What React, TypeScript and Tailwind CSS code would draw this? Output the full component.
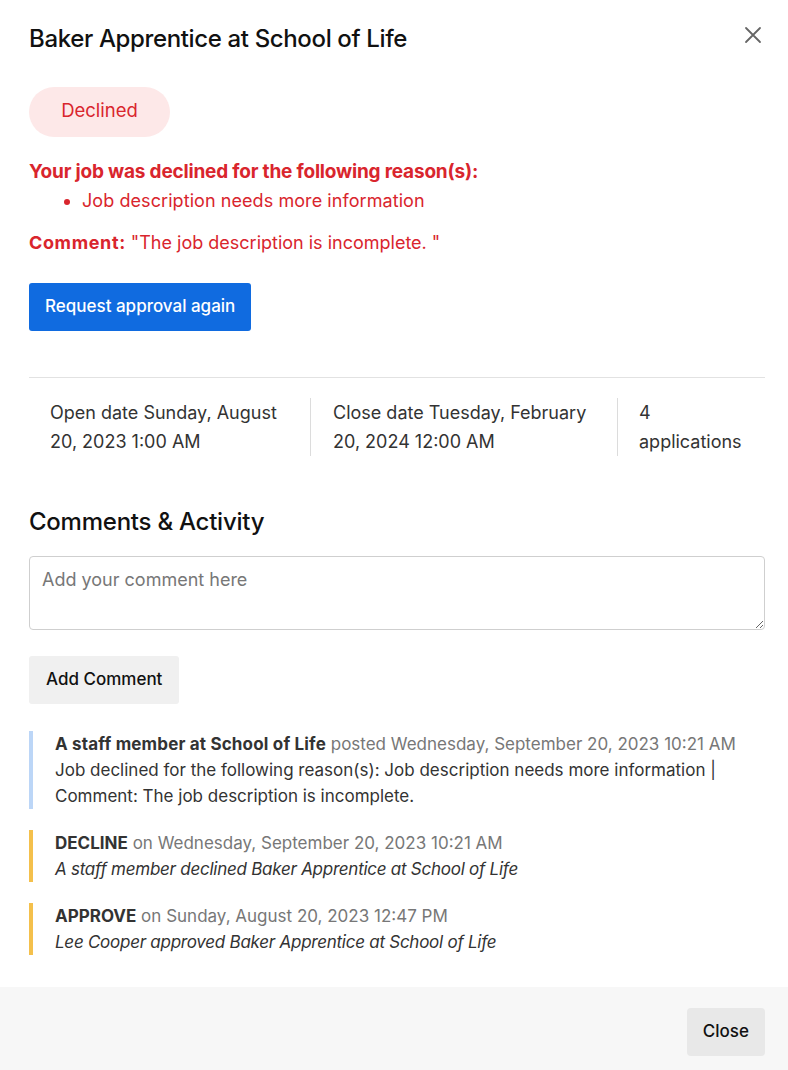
import React from "react";

export default function App() {
  return (
    <div className="w-[788px] min-h-[1070px] bg-white flex flex-col text-[#222]" style={{ fontFamily: "Inter, 'Noto Sans', sans-serif" }}>
      <div className="pl-[29px] pr-[23px] flex-1">
        <div className="flex items-start justify-between pt-[24px]">
          <h1 className="text-[24px] leading-[30px] font-medium tracking-[-0.015em] text-[#111]">Baker Apprentice at School of Life</h1>
          <button className="mt-[2px] mr-[3px] text-[#666]">
            <svg width="18" height="18" viewBox="0 0 18 18" fill="none" stroke="currentColor" strokeWidth="1.8" strokeLinecap="round">
              <path d="M2 2L16 16M16 2L2 16" />
            </svg>
          </button>
        </div>

        <div className="mt-[33px] inline-flex items-center justify-center pb-[2px] h-[50px] w-[141px] rounded-full bg-[#fde8e8] text-[#d9252d] text-[18.5px]">
          Declined
        </div>

        <div className="mt-[20px] text-[#d9252d] text-[18px] leading-[29px]">
          <p className="font-bold text-[19px] tracking-[-0.01em]">Your job was declined for the following reason(s):</p>
          <ul className="list-disc pl-[53px]">
            <li className="tracking-[0.004em]">Job description needs more information</li>
          </ul>
          <p className="mt-[13px]"><span className="font-bold tracking-[0.035em]">Comment:</span> "The job description is incomplete. "</p>
        </div>

        <button className="mt-[26px] h-[48px] px-[16px] rounded-[3px] bg-[#106be0] text-white text-[17px] font-medium">
          Request approval again
        </button>

        <div className="mt-[46px] border-t border-[#e2e2e2]" />

        <div className="mt-[20px] flex text-[18px] leading-[29px] text-[#333]">
          <div className="w-[282px] pl-[21px] pr-[16px] border-r border-[#dcdcdc]">Open date Sunday, August 20, 2023 1:00 AM</div>
          <div className="w-[307px] pl-[22px] pr-[16px] border-r border-[#dcdcdc]">Close date Tuesday, February 20, 2024 12:00 AM</div>
          <div className="flex-1 pl-[21px] pr-[16px]">4 applications</div>
        </div>

        <h2 className="mt-[51px] text-[24px] leading-[30px] font-medium tracking-[-0.01em] text-[#111]">Comments &amp; Activity</h2>

        <textarea
          className="mt-[19px] block w-full h-[74px] border border-[#cfcfcf] rounded-[4px] px-[12px] py-[10px] text-[18px] leading-[26px] placeholder:text-[#777] outline-none"
          placeholder="Add your comment here"
        />

        <button className="mt-[26px] h-[48px] px-[17px] rounded-[3px] bg-[#f0f0f0] text-[#111] text-[17px] font-medium">
          Add Comment
        </button>

        <div className="mt-[27px] flex flex-col gap-[21px] text-[17px] leading-[26px]">
          <div className="border-l-4 border-[#bcd6f7] pl-[22px]">
            <p><span className="font-bold text-[#333] tracking-[0.01em]">A staff member at School of Life</span> <span className="text-[#777]">posted Wednesday, September 20, 2023 10:21 AM</span></p>
            <p className="text-[#333]">Job declined for the following reason(s): Job description needs more information | Comment: The job description is incomplete.</p>
          </div>
          <div className="border-l-4 border-[#f4c04c] pl-[22px]">
            <p><span className="font-bold text-[#333]">DECLINE</span> <span className="text-[#777]">on Wednesday, September 20, 2023 10:21 AM</span></p>
            <p className="italic text-[#333] tracking-[-0.015em]">A staff member declined Baker Apprentice at School of Life</p>
          </div>
          <div className="border-l-4 border-[#f4c04c] pl-[22px]">
            <p><span className="font-bold text-[#333]">APPROVE</span> <span className="text-[#777]">on Sunday, August 20, 2023 12:47 PM</span></p>
            <p className="italic text-[#333] tracking-[-0.015em]">Lee Cooper approved Baker Apprentice at School of Life</p>
          </div>
        </div>
        <div className="h-[29px]" />
      </div>

      <div className="bg-[#f7f7f7] h-[83px] pt-[21px] pl-[29px] pr-[23px] flex items-start justify-end">
        <button className="h-[48px] px-[16px] rounded-[4px] bg-[#e8e8e8] text-[#111] text-[17px] font-medium">Close</button>
      </div>
    </div>
  );
}
